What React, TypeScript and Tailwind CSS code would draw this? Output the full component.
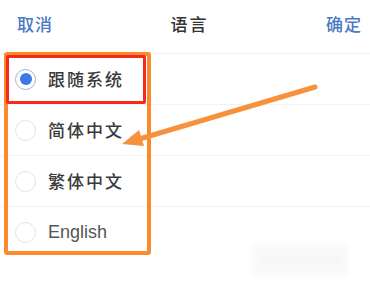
import React from "react";

const rows = [
  { label: "跟随系统", selected: true, en: false },
  { label: "简体中文", selected: false, en: false },
  { label: "繁体中文", selected: false, en: false },
  { label: "English", selected: false, en: true },
];

export default function App() {
  return (
    <div
      className="relative w-[370px] h-[281px] bg-white overflow-hidden"
      style={{ fontFamily: '"Noto Sans CJK SC", "Liberation Sans", sans-serif' }}
    >
      <div className="h-[54px] flex items-center justify-between pl-[17px] pr-[8px] pb-[6px] border-b border-[#f2f2f2]">
        <span className="text-[17px] font-medium text-[#4a78c2] tracking-[1px]">取消</span>
        <span className="text-[17px] font-medium text-[#333] tracking-[2px]">语言</span>
        <span className="text-[17px] font-medium text-[#4a78c2] tracking-[1px]">确定</span>
      </div>
      <div className="flex flex-col">
        {rows.map((r, i) => (
          <div
            key={i}
            className={`h-[51px] flex items-center pl-[15px] gap-[12px] ${i < 3 ? "border-b border-[#f2f2f2]" : ""}`}
          >
            <div
              className={`w-[21px] h-[21px] rounded-full flex items-center justify-center border-[1.5px] ${
                r.selected ? "border-[#9fb3d6]" : "border-[#e2e2e2]"
              }`}
            >
              {r.selected && <div className="w-[12px] h-[12px] rounded-full bg-[#3c78e6]" />}
            </div>
            <span
              className={
                r.en
                  ? "text-[18px] text-[#555]"
                  : "text-[17px] font-medium text-[#3a3a3a] tracking-[2px]"
              }
              style={r.en ? { fontFamily: '"Liberation Sans", sans-serif' } : undefined}
            >
              {r.label}
            </span>
          </div>
        ))}
      </div>

      {/* annotation: orange box */}
      <div className="absolute left-[4px] top-[52px] w-[147px] h-[203px] border-[4px] border-[#fa8a2c] rounded-[3px]" />
      {/* annotation: red box */}
      <div className="absolute left-[6px] top-[55px] w-[140px] h-[49px] border-[3px] border-[#f7281c] rounded-[2px]" />
      {/* annotation: arrow */}
      <svg className="absolute left-0 top-0" width="370" height="281" viewBox="0 0 370 281">
        <line x1="315" y1="87" x2="136" y2="140" stroke="#f8913c" strokeWidth="5" strokeLinecap="round" />
        <polygon points="122,144 139,130 144,146" fill="#f8913c" />
      </svg>
      {/* blurred watermark */}
      <div className="absolute left-[253px] top-[245px] w-[95px] h-[30px] bg-[#f5f5f5] blur-[3px] opacity-70" />
    </div>
  );
}
